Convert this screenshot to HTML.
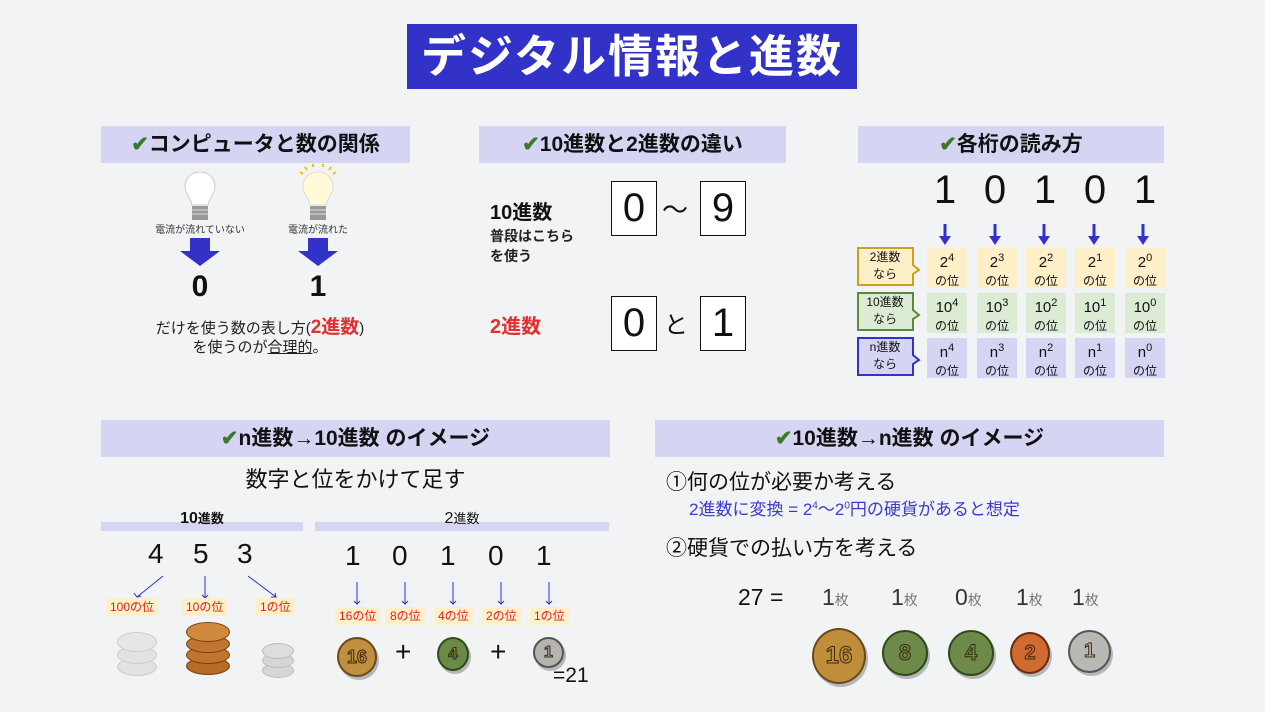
<!DOCTYPE html>
<html><head><meta charset="utf-8"><style>
body{margin:0;width:1265px;height:712px;background:#f2f3f5;font-family:"Liberation Sans","Noto Sans CJK JP",sans-serif;position:relative;overflow:hidden;color:#111}
.a{position:absolute}
.hd{position:absolute;background:#d5d5f3;height:37px;font-weight:bold;font-size:21px;text-align:center;line-height:37px;color:#111}
.hd b{color:#3b7a2a}
.bx{position:absolute;border:1.5px solid #111;background:#fff;font-size:40px;text-align:center;line-height:52px}
.c{position:absolute;width:40px;height:39px;text-align:center;font-size:15px;line-height:18px;padding-top:1px}
.c span{font-size:12px;display:block}
.c sup{font-size:11px}
.y{background:#fdefc8}.g{background:#dcebd4}.p{background:#d5d5f3}
.lab{position:absolute;width:56px;height:40px;border:2px solid;font-size:13px;text-align:center;line-height:17px;padding-top:2px;box-sizing:border-box}
.lab i{position:absolute;right:-9px;top:18px;width:10px;height:10px;border:2px solid;border-left:none;border-bottom:none;transform:rotate(45deg) translate(-3px,3px);background:inherit;display:none}
.rl{position:absolute;background:#fdefc8;color:#e02020;font-size:12px;height:18px;line-height:18px;padding:0 4px}
.coin{position:absolute;border-radius:50%;box-sizing:border-box;text-align:center;font-weight:bold;color:transparent;-webkit-text-stroke:1px #3a2a10;box-shadow:2px 3px 0 rgba(0,0,0,.25)}
</style></head><body>
<div class="a" style="left:407px;top:24px;width:450px;height:65px;background:#3232c8;color:#fff;font-weight:bold;font-size:45px;letter-spacing:2px;text-align:center;line-height:65px">デジタル情報と進数</div>

<div class="hd" style="left:101px;top:126px;width:309px"><b>✔</b>コンピュータと数の関係</div>
<div class="hd" style="left:479px;top:126px;width:307px"><b>✔</b>10進数と2進数の違い</div>
<div class="hd" style="left:858px;top:126px;width:306px"><b>✔</b>各桁の読み方</div>
<div class="hd" style="left:101px;top:420px;width:509px"><b>✔</b>n進数→10進数 のイメージ</div>
<div class="hd" style="left:655px;top:420px;width:509px"><b>✔</b>10進数→n進数 のイメージ</div>

<svg class="a" style="left:178px;top:164px" width="44" height="62"><path d="M22 8c-10 0-15 7-15 15 0 7 6 11 7 18h16c1-7 7-11 7-18 0-8-5-15-15-15z" fill="#fff" stroke="#ccc"/><rect x="14" y="42" width="16" height="14" fill="#999"/><path d="M14 46h16M14 50h16" stroke="#ddd"/></svg>
<svg class="a" style="left:296px;top:164px" width="44" height="62"><path d="M22 8c-10 0-15 7-15 15 0 7 6 11 7 18h16c1-7 7-11 7-18 0-8-5-15-15-15z" fill="#fffbd8" stroke="#ddd"/><rect x="14" y="42" width="16" height="14" fill="#999"/><path d="M14 46h16M14 50h16" stroke="#ddd"/><path d="M9 3l2 3M17 0v3M27 0v3M35 3l-2 3M40 8l-3 2M4 8l3 2" stroke="#f5c400" stroke-width="2"/></svg>
<div class="a" style="left:140px;top:221px;width:120px;text-align:center;font-size:10px;color:#333">電流が流れていない</div>
<div class="a" style="left:258px;top:221px;width:120px;text-align:center;font-size:10px;color:#333">電流が流れた</div>
<svg class="a" style="left:178px;top:238px" width="44" height="30"><path d="M12 0h20v13h10L22 28 2 13h10z" fill="#3232c8"/></svg>
<svg class="a" style="left:296px;top:238px" width="44" height="30"><path d="M12 0h20v13h10L22 28 2 13h10z" fill="#3232c8"/></svg>
<div class="a" style="left:180px;top:270px;width:40px;text-align:center;font-size:30px;font-weight:bold">0</div>
<div class="a" style="left:298px;top:270px;width:40px;text-align:center;font-size:30px;font-weight:bold">1</div>
<div class="a" style="left:140px;top:312px;width:240px;text-align:center;font-size:15px;color:#222">だけを使う数の表し方(<span style="color:#e03030;font-weight:bold;font-size:19px">2進数</span>)</div>
<div class="a" style="left:140px;top:336px;width:240px;text-align:center;font-size:15px;color:#222">を使うのが<u>合理的</u>。</div>

<div class="a" style="left:490px;top:196px;font-size:20px;font-weight:bold">10進数</div>
<div class="a" style="left:490px;top:226px;font-size:14px;line-height:20px;font-weight:bold;color:#222">普段はこちら<br>を使う</div>
<div class="a" style="left:490px;top:310px;font-size:20px;font-weight:bold;color:#e03030">2進数</div>
<div class="bx" style="left:611px;top:181px;width:44px;height:53px">0</div>
<div class="a" style="left:662px;top:190px;font-size:26px">～</div>
<div class="bx" style="left:700px;top:181px;width:44px;height:53px">9</div>
<div class="bx" style="left:611px;top:296px;width:44px;height:53px">0</div>
<div class="a" style="left:664px;top:305px;font-size:24px">と</div>
<div class="bx" style="left:700px;top:296px;width:44px;height:53px">1</div>

<div class="a" style="left:925px;top:168px;font-size:40px">
<span class="a" style="left:0;width:40px;text-align:center">1</span><span class="a" style="left:50px;width:40px;text-align:center">0</span><span class="a" style="left:100px;width:40px;text-align:center">1</span><span class="a" style="left:150px;width:40px;text-align:center">0</span><span class="a" style="left:200px;width:40px;text-align:center">1</span></div>
<svg class="a" style="left:928px;top:222px" width="240" height="26" fill="#3232c8" stroke="#3232c8" stroke-width="3">
<g><path d="M17 2v14"/><path d="M11 14h12l-6 9z" stroke="none"/></g>
<g transform="translate(50 0)"><path d="M17 2v14"/><path d="M11 14h12l-6 9z" stroke="none"/></g>
<g transform="translate(99 0)"><path d="M17 2v14"/><path d="M11 14h12l-6 9z" stroke="none"/></g>
<g transform="translate(149 0)"><path d="M17 2v14"/><path d="M11 14h12l-6 9z" stroke="none"/></g>
<g transform="translate(198 0)"><path d="M17 2v14"/><path d="M11 14h12l-6 9z" stroke="none"/></g>
</svg>
<svg class="a" style="left:856px;top:246px" width="70" height="134">
<g stroke-width="2"><path d="M2 2h55v17l6 5-6 4v11H2z" fill="#fdefc8" stroke="#c9a020"/>
<path d="M2 47h55v17l6 5-6 4v11H2z" fill="#dcebd4" stroke="#5a8a3a"/>
<path d="M2 92h55v17l6 5-6 4v11H2z" fill="#d5d5f3" stroke="#3232c8"/></g></svg>
<div class="a" style="left:858px;top:249px;width:54px;text-align:center;font-size:12px;line-height:17px">2進数<br>なら</div>
<div class="a" style="left:858px;top:294px;width:54px;text-align:center;font-size:12px;line-height:17px">10進数<br>なら</div>
<div class="a" style="left:858px;top:339px;width:54px;text-align:center;font-size:12px;line-height:17px">n進数<br>なら</div>
<div class="c y" style="left:927px;top:248px">2<sup>4</sup><span>の位</span></div>
<div class="c y" style="left:977px;top:248px">2<sup>3</sup><span>の位</span></div>
<div class="c y" style="left:1026px;top:248px">2<sup>2</sup><span>の位</span></div>
<div class="c y" style="left:1075px;top:248px">2<sup>1</sup><span>の位</span></div>
<div class="c y" style="left:1125px;top:248px">2<sup>0</sup><span>の位</span></div>
<div class="c g" style="left:927px;top:293px">10<sup>4</sup><span>の位</span></div>
<div class="c g" style="left:977px;top:293px">10<sup>3</sup><span>の位</span></div>
<div class="c g" style="left:1026px;top:293px">10<sup>2</sup><span>の位</span></div>
<div class="c g" style="left:1075px;top:293px">10<sup>1</sup><span>の位</span></div>
<div class="c g" style="left:1125px;top:293px">10<sup>0</sup><span>の位</span></div>
<div class="c p" style="left:927px;top:338px">n<sup>4</sup><span>の位</span></div>
<div class="c p" style="left:977px;top:338px">n<sup>3</sup><span>の位</span></div>
<div class="c p" style="left:1026px;top:338px">n<sup>2</sup><span>の位</span></div>
<div class="c p" style="left:1075px;top:338px">n<sup>1</sup><span>の位</span></div>
<div class="c p" style="left:1125px;top:338px">n<sup>0</sup><span>の位</span></div>

<div class="a" style="left:101px;top:462px;width:509px;text-align:center;font-size:22px">数字と位をかけて足す</div>
<div class="a" style="left:101px;top:522px;width:202px;height:9px;background:#d5d5f3"></div>
<div class="a" style="left:315px;top:522px;width:294px;height:9px;background:#d5d5f3"></div>
<div class="a" style="left:101px;top:508px;width:202px;text-align:center;font-size:16px;font-weight:bold">10<span style="font-size:13px">進数</span></div>
<div class="a" style="left:315px;top:508px;width:294px;text-align:center;font-size:16px">2<span style="font-size:13px">進数</span></div>
<div class="a" style="left:148px;top:538px;font-size:28px">4</div>
<div class="a" style="left:193px;top:538px;font-size:28px">5</div>
<div class="a" style="left:237px;top:538px;font-size:28px">3</div>
<svg class="a" style="left:101px;top:570px" width="520" height="40" stroke="#3232c8" fill="none" stroke-width="1">
<path d="M62 6L36 27M33 23l3 4 4-1"/><path d="M104 6v22M101 25l3 3 3-3"/><path d="M147 6l28 21M170 27h5l-1-4"/>
<path d="M256 12v22M253 31l3 3 3-3"/><path d="M304 12v22M301 31l3 3 3-3"/><path d="M352 12v22M349 31l3 3 3-3"/><path d="M400 12v22M397 31l3 3 3-3"/><path d="M448 12v22M445 31l3 3 3-3"/>
</svg>
<div class="rl" style="left:106px;top:598px">100の位</div>
<div class="rl" style="left:182px;top:598px">10の位</div>
<div class="rl" style="left:256px;top:598px">1の位</div>
<div class="a" style="left:345px;top:540px;font-size:28px;width:260px">
<span class="a" style="left:0">1</span><span class="a" style="left:47px">0</span><span class="a" style="left:95px">1</span><span class="a" style="left:143px">0</span><span class="a" style="left:191px">1</span></div>
<div class="rl" style="left:335px;top:607px">16の位</div>
<div class="rl" style="left:386px;top:607px">8の位</div>
<div class="rl" style="left:434px;top:607px">4の位</div>
<div class="rl" style="left:482px;top:607px">2の位</div>
<div class="rl" style="left:530px;top:607px">1の位</div>
<div class="a" style="left:117px;top:630px;width:38px;height:45px">
<div class="a" style="top:28px;width:38px;height:16px;border-radius:50%;background:#e2e2e2;border:1px solid #ccc"></div>
<div class="a" style="top:16px;width:38px;height:16px;border-radius:50%;background:#e2e2e2;border:1px solid #ccc"></div>
<div class="a" style="top:2px;width:38px;height:18px;border-radius:50%;background:#e6e6e6;border:1px solid #ccc"></div></div>
<div class="a" style="left:186px;top:620px;width:42px;height:55px">
<div class="a" style="top:37px;width:42px;height:16px;border-radius:50%;background:#b86a24;border:1px solid #7a4010"></div>
<div class="a" style="top:26px;width:42px;height:16px;border-radius:50%;background:#c07530;border:1px solid #7a4010"></div>
<div class="a" style="top:15px;width:42px;height:16px;border-radius:50%;background:#c07530;border:1px solid #7a4010"></div>
<div class="a" style="top:2px;width:42px;height:18px;border-radius:50%;background:#d08a40;border:1px solid #7a4010"></div></div>
<div class="a" style="left:262px;top:643px;width:30px;height:36px">
<div class="a" style="top:20px;width:30px;height:13px;border-radius:50%;background:#d6d6d6;border:1px solid #bbb"></div>
<div class="a" style="top:10px;width:30px;height:13px;border-radius:50%;background:#d6d6d6;border:1px solid #bbb"></div>
<div class="a" style="top:0;width:30px;height:14px;border-radius:50%;background:#ddd;border:1px solid #bbb"></div></div>
<div class="coin" style="left:337px;top:637px;width:40px;height:40px;background:#c09040;border:2px solid #6a4a18;font-size:18px;line-height:36px">16</div>
<div class="a" style="left:395px;top:636px;font-size:28px">+</div>
<div class="coin" style="left:437px;top:637px;width:32px;height:34px;background:#6a8a48;border:2px solid #2e4a1a;font-size:17px;line-height:30px">4</div>
<div class="a" style="left:490px;top:636px;font-size:28px">+</div>
<div class="coin" style="left:533px;top:637px;width:31px;height:31px;background:#b4b4b0;border:2px solid #555;font-size:16px;line-height:27px">1</div>
<div class="a" style="left:553px;top:664px;font-size:21px">=21</div>

<div class="a" style="left:666px;top:466px;font-size:21px">①何の位が必要か考える</div>
<div class="a" style="left:689px;top:495px;font-size:17px;color:#3a3ad0">2進数に変換 = 2<sup style="font-size:10px">4</sup>～2<sup style="font-size:10px">0</sup>円の硬貨があると想定</div>
<div class="a" style="left:666px;top:532px;font-size:21px">②硬貨での払い方を考える</div>
<div class="a" style="left:738px;top:584px;font-size:23px">27 =</div>
<div class="a" style="left:822px;top:584px;font-size:23px;color:#333">1<span style="font-size:14px;color:#777">枚</span></div>
<div class="a" style="left:891px;top:584px;font-size:23px;color:#333">1<span style="font-size:14px;color:#777">枚</span></div>
<div class="a" style="left:955px;top:584px;font-size:23px;color:#333">0<span style="font-size:14px;color:#777">枚</span></div>
<div class="a" style="left:1016px;top:584px;font-size:23px;color:#333">1<span style="font-size:14px;color:#777">枚</span></div>
<div class="a" style="left:1072px;top:584px;font-size:23px;color:#333">1<span style="font-size:14px;color:#777">枚</span></div>
<div class="coin" style="left:812px;top:628px;width:54px;height:56px;background:#c08e3a;border:2px solid #6a4a18;font-size:24px;line-height:52px">16</div>
<div class="coin" style="left:882px;top:630px;width:46px;height:46px;background:#6e8a4a;border:2px solid #2e4a1a;font-size:22px;line-height:42px">8</div>
<div class="coin" style="left:948px;top:630px;width:46px;height:46px;background:#6e8a4a;border:2px solid #2e4a1a;font-size:22px;line-height:42px">4</div>
<div class="coin" style="left:1010px;top:632px;width:40px;height:42px;background:#d06a30;border:2px solid #6a2a10;font-size:20px;line-height:38px">2</div>
<div class="coin" style="left:1068px;top:630px;width:43px;height:43px;background:#b8b8b4;border:2px solid #555;font-size:20px;line-height:39px">1</div>
</body></html>
